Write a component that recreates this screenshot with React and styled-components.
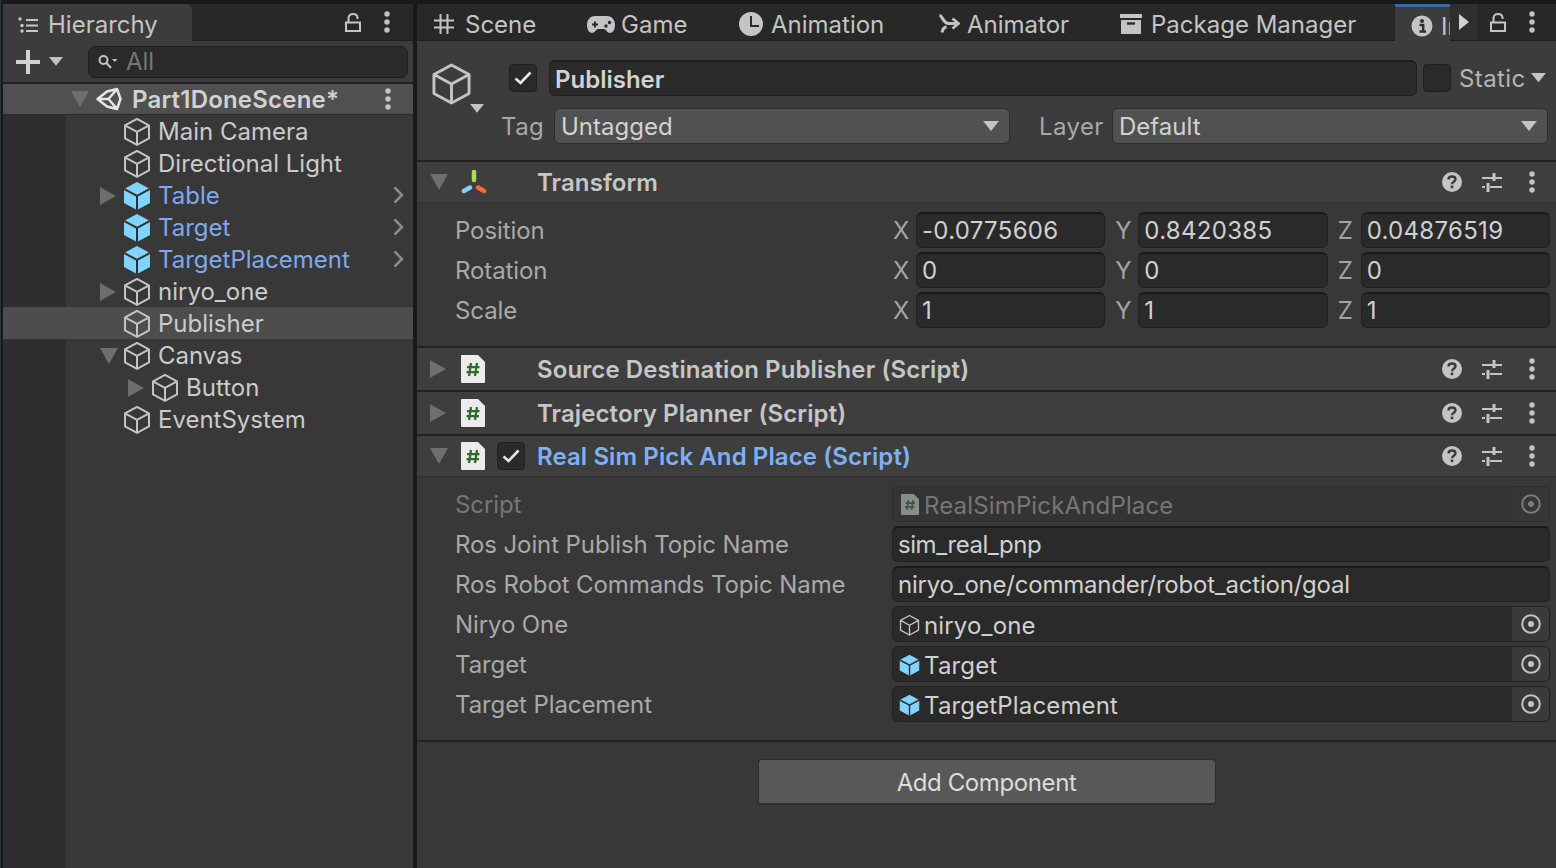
import React from "react";
import styled, { createGlobalStyle } from "styled-components";

const GlobalStyle = createGlobalStyle`
  html, body { margin: 0; padding: 0; background: #191919; }
  body {
    font-family: Inter, "Liberation Sans", sans-serif;
    font-size: 24px;
    color: #c8c8c8;
    overflow: hidden;
  }
  * { box-sizing: border-box; }
  svg { display: block; flex: none; }
`;

const Page = styled.div`
  width: 1556px;
  height: 868px;
  display: flex;
  padding: 4px 0 0 2px;
  gap: 4px;
  background: #191919;
  border-left: 1px solid #26324a;
`;

const LeftPanel = styled.section`
  width: 410px;
  flex: none;
  display: flex;
  flex-direction: column;
`;

const RightPanel = styled.section`
  flex: 1;
  min-width: 0;
  display: flex;
  flex-direction: column;
  background: #383838;
`;

const TabBar = styled.div`
  height: 37px;
  flex: none;
  display: flex;
  align-items: stretch;
  background: #282828;
  border-bottom: 1px solid #1f1f1f;
`;

const Tab = styled.div`
  width: ${(p) => p.$width}px;
  flex: none;
  display: flex;
  align-items: center;
  gap: ${(p) => p.$gap || 8}px;
  padding-left: ${(p) => p.$pad || 17}px;
  color: #c4c4c4;
  white-space: nowrap;
  overflow: hidden;
  padding-top: 4px;
  background: ${(p) => (p.$active ? "#3c3c3c" : "transparent")};
  border-top: ${(p) => (p.$accent ? "3px solid #3a6a9c" : "none")};
  border-top-right-radius: ${(p) => (p.$round ? "6px" : "0")};
  margin-bottom: ${(p) => (p.$active ? "-1px" : "0")};
`;

const TabTools = styled.div`
  margin-left: auto;
  display: flex;
  align-items: center;
`;

const ToolSlot = styled.div`
  width: ${(p) => p.$width || 40}px;
  height: 36px;
  display: flex;
  align-items: center;
  justify-content: center;
  background: ${(p) => p.$bg || "transparent"};
`;

const HierarchyBar = styled.div`
  height: 43px;
  flex: none;
  display: flex;
  align-items: center;
  background: #3c3c3c;
  border-bottom: 2px solid #232323;
  padding: 0 5px 0 13px;
  gap: 9px;
`;

const SearchBox = styled.div`
  margin-left: 16px;
  flex: 1;
  height: 32px;
  display: flex;
  align-items: center;
  gap: 8px;
  padding-left: 9px;
  background: #2a2a2a;
  border: 1px solid #1f1f1f;
  border-radius: 7px;
  color: #767676;
`;

const Tree = styled.div`
  flex: 1;
  background: linear-gradient(to right, #2e2e2e 63px, #383838 63px);
`;

const SceneRow = styled.div`
  height: 31px;
  display: flex;
  align-items: center;
  background: #505050;
  padding-left: 68px;
  padding-right: 22px;
  font-weight: 600;
  letter-spacing: 0.2px;
  color: #d2d2d2;
  border-bottom: 1px solid #2a2a2a;
`;

const TreeRow = styled.div`
  height: 32px;
  display: flex;
  align-items: center;
  padding-left: ${(p) => 97 + p.$depth * 28}px;
  padding-right: 9px;
  background: ${(p) => (p.$selected ? "#4d4d4d" : "transparent")};
  color: ${(p) => (p.$prefab ? "#7fa8ee" : "#cbcbcb")};
  white-space: nowrap;
`;

const ArrowSlot = styled.div`
  width: ${(p) => p.$width}px;
  flex: none;
  display: flex;
  align-items: center;
`;

const TreeIcon = styled.div`
  display: flex;
  margin-top: 2px;
`;

const RowLabel = styled.span`
  margin-left: ${(p) => p.$gap || 7}px;
`;

const RowEnd = styled.div`
  margin-left: auto;
`;

const Header = styled.div`
  height: 121px;
  flex: none;
  background: #3c3c3c;
  display: flex;
  flex-direction: column;
  padding-top: 19px;
  gap: 12px;
  border-bottom: 2px solid #232323;
`;

const HeaderRow = styled.div`
  display: flex;
  align-items: center;
  height: 36px;
`;

const HeaderIcon = styled.div`
  width: 92px;
  height: 36px;
  flex: none;
  padding: 2px 0 0 14px;
  position: relative;
`;

const IconCaret = styled.div`
  position: absolute;
  left: 53px;
  top: 44px;
`;

const Check = styled.div`
  width: 28px;
  height: 28px;
  flex: none;
  display: flex;
  align-items: center;
  justify-content: center;
  background: #2a2a2a;
  border: 1px solid #212121;
  border-radius: 4px;
`;

const NameInput = styled.div`
  width: 868px;
  height: 36px;
  margin: 0 6px 0 12px;
  display: flex;
  align-items: center;
  padding: 2px 0 0 5px;
  font-weight: 600;
  color: #d2d2d2;
  background: #2a2a2a;
  border: 1px solid #212121;
  border-top: 2px solid #1c1c1c;
  border-radius: 6px;
`;

const StaticLabel = styled.div`
  margin-left: 8px;
  display: flex;
  align-items: center;
  gap: 5px;
  color: #b4b4b4;
  letter-spacing: 0.4px;
`;

const HeaderLabel = styled.span`
  width: ${(p) => p.$width}px;
  flex: none;
  padding-left: ${(p) => p.$pad}px;
  color: #a8a8a8;
  letter-spacing: 0.4px;
`;

const Popup = styled.div`
  width: ${(p) => p.$width}px;
  height: 36px;
  flex: none;
  display: flex;
  align-items: center;
  justify-content: space-between;
  padding: 0 10px 0 6px;
  background: #515151;
  border: 1px solid #2e2e2e;
  border-radius: 6px;
  color: #d2d2d2;
`;

const ComponentHead = styled.div`
  height: ${(p) => (p.$open ? 42 : 44)}px;
  flex: none;
  display: grid;
  grid-template-columns: 44px 36px 40px 1fr auto;
  align-items: center;
  background: #3e3e3e;
  border-bottom: 2px solid ${(p) => (p.$open ? "#333333" : "#232323")};
  font-weight: 600;
  letter-spacing: 0.1px;
  color: ${(p) => (p.$prefab ? "#7fb0f5" : "#c6c6c6")};
`;

const Foldout = styled.div`
  padding-left: 13px;
`;

const HeadTools = styled.div`
  display: flex;
  padding-right: 4px;
`;

const Body = styled.div`
  flex: none;
  padding: 6px 0 16px;
  border-bottom: 2px solid #232323;
  display: flex;
  flex-direction: column;
`;

const PropRow = styled.div`
  height: 40px;
  display: grid;
  grid-template-columns: ${(p) => p.$columns};
  align-items: center;
  padding-left: 38px;
  padding-right: 6px;
`;

const PropLabel = styled.span`
  color: ${(p) => (p.$dim ? "#767676" : "#a9a9a9")};
  letter-spacing: -0.1px;
  white-space: nowrap;
`;

const Vec = styled.div`
  display: flex;
  gap: 10px;
`;

const VecItem = styled.div`
  flex: 1;
  display: flex;
  align-items: center;
`;

const Axis = styled.span`
  width: 23px;
  flex: none;
  color: #a4a4a4;
`;

const Field = styled.div`
  flex: 1;
  min-width: 0;
  height: 36px;
  display: flex;
  align-items: center;
  padding-left: 5px;
  background: ${(p) => (p.$ghost ? "#343434" : "#2a2a2a")};
  border: 1px solid ${(p) => (p.$ghost ? "#2e2e2e" : "#212121")};
  border-top: 2px solid ${(p) => (p.$ghost ? "#2e2e2e" : "#1a1a1a")};
  border-radius: 6px;
  color: ${(p) => (p.$ghost ? "#767676" : "#d0d0d0")};
  letter-spacing: ${(p) => p.$spacing ?? 0.3}px;
  white-space: nowrap;
  overflow: hidden;
`;

const ObjectField = styled(Field)`
  padding: 2px 0 0 ${(p) => (p.$ghost ? 8 : 6)}px;
  gap: ${(p) => (p.$ghost ? 5 : 4)}px;
  letter-spacing: 0.15px;
  border-top-width: 1px;
  border-top-color: ${(p) => (p.$ghost ? "#2e2e2e" : "#212121")};
`;

const Picker = styled.div`
  margin: -2px 0 0 auto;
  align-self: flex-start;
  width: 37px;
  height: 34px;
  display: flex;
  align-items: center;
  justify-content: center;
  background: ${(p) => (p.$ghost ? "#363636" : "#3a3a3a")};
`;

const Footer = styled.div`
  flex: 1;
  padding-top: 17px;
  display: flex;
  justify-content: center;
`;

const AddButton = styled.div`
  width: 458px;
  height: 46px;
  display: flex;
  align-items: center;
  justify-content: center;
  padding-top: 1px;
  background: #585858;
  border: 1px solid #2e2e2e;
  border-bottom-width: 2px;
  border-radius: 4px;
  color: #dcdcdc;
  letter-spacing: -0.4px;
`;

const Down = ({ size = 16, color = "#c4c4c4" }) => (
  <svg width={size} height={size * 0.62} viewBox="0 0 16 10">
    <path d="M0 0H16L8 10Z" fill={color} />
  </svg>
);

const FoldOpen = () => (
  <svg width="18" height="16" viewBox="0 0 18 16">
    <path d="M0 0H18L9 16Z" fill="#6e6e6e" />
  </svg>
);

const FoldClosed = () => (
  <svg width="16" height="18" viewBox="0 0 16 18">
    <path d="M0 0L16 9L0 18Z" fill="#6e6e6e" />
  </svg>
);

const Cube = ({ size = 28, prefab, color = "#c4c4c4", width = 2 }) =>
  prefab ? (
    <svg width={size} height={size * 1.07} viewBox="0 0 28 30">
      <path d="M14 1L27 8V22L14 29L1 22V8Z" fill="#80d4ff" />
      <path d="M1 8L14 15L27 8M14 15V29" fill="none" stroke="#303030" strokeWidth="2" />
    </svg>
  ) : (
    <svg width={size} height={size * 1.07} viewBox="0 0 28 30">
      <path
        d="M14 2L26 8.5V21.5L14 28L2 21.5V8.5Z M2 8.5L14 15L26 8.5M14 15V28"
        fill="none"
        stroke={color}
        strokeWidth={width}
        strokeLinejoin="round"
      />
    </svg>
  );

const UnityLogo = () => (
  <svg width="26" height="24" viewBox="0 0 26 24">
    <path
      d="M1.5 12L11 4.5L21 2L24.5 12L21 22L11 19.5Z M1.5 12H12.5M21 2L12.5 12L21 22"
      fill="none"
      stroke="#e6e6e6"
      strokeWidth="2.5"
      strokeLinejoin="round"
    />
  </svg>
);

const Dots = ({ color = "#c4c4c4" }) => (
  <svg width="6" height="22" viewBox="0 0 6 22">
    <circle cx="3" cy="3" r="2.7" fill={color} />
    <circle cx="3" cy="11" r="2.7" fill={color} />
    <circle cx="3" cy="19" r="2.7" fill={color} />
  </svg>
);

const Lock = () => (
  <svg width="16" height="19" viewBox="0 0 16 19">
    <path
      d="M1 9.5H15V18H1Z M3.5 9.5V5C3.5 2.2 5.5 1 8 1C10.5 1 12.5 2.2 12.5 5V6"
      fill="none"
      stroke="#c4c4c4"
      strokeWidth="2"
    />
  </svg>
);

const ListIcon = () => (
  <svg width="20" height="16" viewBox="0 0 20 16">
    <path d="M8 3H20M8 8.5H20M8 14H20" stroke="#c4c4c4" strokeWidth="2" />
    <circle cx="2" cy="2" r="1.7" fill="#c4c4c4" />
    <circle cx="4" cy="8.5" r="1.7" fill="#c4c4c4" />
    <circle cx="4" cy="14" r="1.7" fill="#c4c4c4" />
  </svg>
);

const SearchIcon = () => (
  <svg width="20" height="16" viewBox="0 0 20 16">
    <circle cx="5.5" cy="6" r="4" fill="none" stroke="#c4c4c4" strokeWidth="2" />
    <path d="M8.5 9L13 14" stroke="#c4c4c4" strokeWidth="2" />
    <path d="M14 5H19.5L16.7 8Z" fill="#c4c4c4" />
  </svg>
);

const Plus = () => (
  <svg width="24" height="24" viewBox="0 0 24 24">
    <path d="M0 12H24M12 0V24" stroke="#d2d2d2" strokeWidth="4" />
  </svg>
);

const SceneIcon = () => (
  <svg width="20" height="20" viewBox="0 0 20 20">
    <path d="M6.5 0V20M13.5 0V20M0 6.5H20M0 13.5H20" stroke="#c4c4c4" strokeWidth="2" />
  </svg>
);

const GameIcon = () => (
  <svg width="28" height="18" viewBox="0 0 28 18">
    <path
      d="M8 1H20C25 1 28 5 28 10C28 15 25.5 18 23 18C20 18 19 14 17 14H11C9 14 8 18 5 18C2.5 18 0 15 0 10C0 5 3 1 8 1Z"
      fill="#c4c4c4"
    />
    <path d="M5 9.5H11M8 6.5V12.5" stroke="#2a2a2a" strokeWidth="2" />
    <circle cx="19" cy="11" r="1.7" fill="#2a2a2a" />
    <circle cx="22.5" cy="7.5" r="1.7" fill="#2a2a2a" />
  </svg>
);

const ClockIcon = () => (
  <svg width="24" height="24" viewBox="0 0 24 24">
    <circle cx="12" cy="12" r="12" fill="#c4c4c4" />
    <path d="M12 4V14H20" fill="none" stroke="#2a2a2a" strokeWidth="2" />
  </svg>
);

const AnimatorIcon = () => (
  <svg width="22" height="20" viewBox="0 0 22 20">
    <path
      d="M1.5 1.5C5 2 4 8 10 9.5H19M4 18.5C4.5 15.5 6 13.5 8.5 12.8"
      fill="none"
      stroke="#c4c4c4"
      strokeWidth="3"
    />
    <path d="M14.5 4.5L20.5 9.5L14.5 14.5" fill="none" stroke="#c4c4c4" strokeWidth="2.6" />
  </svg>
);

const PackageIcon = () => (
  <svg width="22" height="20" viewBox="0 0 22 20">
    <path d="M0 0H22V4H0Z" fill="#c4c4c4" />
    <path d="M1 6H21V20H1Z" fill="#c4c4c4" />
    <path d="M7 9.5H15" stroke="#2a2a2a" strokeWidth="2.4" />
  </svg>
);

const InfoIcon = () => (
  <svg width="22" height="22" viewBox="0 0 22 22">
    <circle cx="11" cy="11" r="10.5" fill="#c4c4c4" />
    <circle cx="11" cy="6" r="2" fill="#2f2f2f" />
    <path d="M8.5 10H12.2V16.5M8.5 16.5H15" fill="none" stroke="#2f2f2f" strokeWidth="2.4" />
  </svg>
);

const PlayIcon = () => (
  <svg width="10" height="16" viewBox="0 0 10 16">
    <path d="M0 0L10 8L0 16Z" fill="#d2d2d2" />
  </svg>
);

const HelpIcon = () => (
  <svg width="20" height="20" viewBox="0 0 20 20">
    <circle cx="10" cy="10" r="10" fill="#c4c4c4" />
    <path
      d="M6.5 7.5C6.5 5.5 8 4.5 10 4.5C12 4.5 13.5 5.7 13.5 7.3C13.5 9.8 10 9.5 10 12.2"
      fill="none"
      stroke="#3a3a3a"
      strokeWidth="2.4"
    />
    <rect x="8.7" y="13.6" width="2.6" height="2.6" fill="#3a3a3a" />
  </svg>
);

const SlidersIcon = () => (
  <svg width="20" height="20" viewBox="0 0 20 20">
    <path d="M0 6H20M0 15H3M8 15H20" stroke="#c4c4c4" strokeWidth="2" />
    <path d="M12 1V9M6 11V20" stroke="#c4c4c4" strokeWidth="3" />
  </svg>
);

const TransformIcon = () => (
  <svg width="26" height="24" viewBox="0 0 26 24">
    <path d="M13 2V10" stroke="#a7e04f" strokeWidth="4.5" strokeLinecap="round" />
    <path d="M3 21L9 17.5" stroke="#7fd0fb" strokeWidth="4.5" strokeLinecap="round" />
    <path d="M23 21L17 17.5" stroke="#ee6c40" strokeWidth="4.5" strokeLinecap="round" />
  </svg>
);

const ScriptIcon = ({ width = 24, dim }) => (
  <svg width={width} height={width * 1.17} viewBox="0 0 24 28">
    <path d="M1 0H17L24 7V27C24 27.5 23.5 28 23 28H1C.5 28 0 27.5 0 27V1C0 .5 .5 0 1 0Z" fill={dim ? "#8a8a8a" : "#ececec"} />
    <path
      d="M10 8L8 21M16 8L14 21M6 12H18.5M5.5 17H18"
      fill="none"
      stroke={dim ? "#365a36" : "#2f6a2f"}
      strokeWidth="2.3"
    />
  </svg>
);

const Tick = () => (
  <svg width="18" height="14" viewBox="0 0 18 14">
    <path d="M1.5 7.5L6.5 12L16.5 1.5" fill="none" stroke="#e8e8e8" strokeWidth="2.6" />
  </svg>
);

const TargetIcon = ({ dim }) => (
  <svg width="20" height="20" viewBox="0 0 20 20">
    <circle cx="10" cy="10" r="8.8" fill="none" stroke={dim ? "#7c7c7c" : "#c4c4c4"} strokeWidth="2" />
    <circle cx="10" cy="10" r="3" fill={dim ? "#7c7c7c" : "#c4c4c4"} />
  </svg>
);

const ChevronIcon = () => (
  <svg width="11" height="18" viewBox="0 0 11 18">
    <path d="M1.5 1.5L9 9L1.5 16.5" fill="none" stroke="#8a8a8a" strokeWidth="2.6" />
  </svg>
);

const TREE = [
  { name: "Main Camera", depth: 0 },
  { name: "Directional Light", depth: 0 },
  { name: "Table", depth: 0, prefab: true, fold: "closed" },
  { name: "Target", depth: 0, prefab: true },
  { name: "TargetPlacement", depth: 0, prefab: true },
  { name: "niryo_one", depth: 0, fold: "closed" },
  { name: "Publisher", depth: 0, selected: true },
  { name: "Canvas", depth: 0, fold: "open" },
  { name: "Button", depth: 1, fold: "closed" },
  { name: "EventSystem", depth: 0 },
];

const TRANSFORM = [
  { label: "Position", x: "-0.0775606", y: "0.8420385", z: "0.04876519" },
  { label: "Rotation", x: "0", y: "0", z: "0" },
  { label: "Scale", x: "1", y: "1", z: "1" },
];

const VEC_COLUMNS = "438px 1fr";
const FIELD_COLUMNS = "437px 1fr";

const Tools = () => (
  <HeadTools>
    <ToolSlot><HelpIcon /></ToolSlot>
    <ToolSlot><SlidersIcon /></ToolSlot>
    <ToolSlot><Dots /></ToolSlot>
  </HeadTools>
);

const App = () => (
  <Page>
    <GlobalStyle />
    <LeftPanel>
      <TabBar>
        <Tab $active $round $width={189} $pad={15} $gap={10}>
          <ListIcon />
          Hierarchy
        </Tab>
        <TabTools>
          <ToolSlot><Lock /></ToolSlot>
          <ToolSlot $width={28}><Dots /></ToolSlot>
          <ToolSlot $width={12} />
        </TabTools>
      </TabBar>
      <HierarchyBar>
        <Plus />
        <Down size={14} />
        <SearchBox>
          <SearchIcon />
          All
        </SearchBox>
      </HierarchyBar>
      <SceneRow>
        <ArrowSlot $width={25}><FoldOpen /></ArrowSlot>
        <UnityLogo />
        <RowLabel $gap={10}>Part1DoneScene*</RowLabel>
        <RowEnd><Dots /></RowEnd>
      </SceneRow>
      <Tree>
        {TREE.map((row) => (
          <TreeRow
            key={row.name}
            $depth={row.depth}
            $prefab={row.prefab}
            $selected={row.selected}
          >
            <ArrowSlot $width={23}>
              {row.fold === "open" && <TreeIcon><FoldOpen /></TreeIcon>}
              {row.fold === "closed" && <TreeIcon><FoldClosed /></TreeIcon>}
            </ArrowSlot>
            <TreeIcon><Cube prefab={row.prefab} /></TreeIcon>
            <RowLabel>{row.name}</RowLabel>
            {row.prefab && <RowEnd><ChevronIcon /></RowEnd>}
          </TreeRow>
        ))}
      </Tree>
    </LeftPanel>

    <RightPanel>
      <TabBar>
        <Tab $width={153} $gap={11}><SceneIcon />Scene</Tab>
        <Tab $width={152} $gap={6}><GameIcon />Game</Tab>
        <Tab $width={199}><ClockIcon />Animation</Tab>
        <Tab $width={182} $gap={7}><AnimatorIcon />Animator</Tab>
        <Tab $width={292} $gap={9}><PackageIcon />Package Manager</Tab>
        <Tab $active $accent $width={55} $pad={16}><InfoIcon />Inspector</Tab>
        <ToolSlot $width={31} $bg="#2f2f2f"><PlayIcon /></ToolSlot>
        <TabTools>
          <ToolSlot><Lock /></ToolSlot>
          <ToolSlot $width={28}><Dots /></ToolSlot>
          <ToolSlot $width={10} />
        </TabTools>
      </TabBar>

      <Header>
        <HeaderRow>
          <HeaderIcon>
            <Cube size={41} width={2} />
            <IconCaret><Down size={14} /></IconCaret>
          </HeaderIcon>
          <Check><Tick /></Check>
          <NameInput>Publisher</NameInput>
          <Check />
          <StaticLabel>Static<Down size={15} /></StaticLabel>
        </HeaderRow>
        <HeaderRow>
          <HeaderLabel $width={137} $pad={84}>Tag</HeaderLabel>
          <Popup $width={456}>Untagged<Down /></Popup>
          <HeaderLabel $width={102} $pad={29}>Layer</HeaderLabel>
          <Popup $width={436}>Default<Down /></Popup>
        </HeaderRow>
      </Header>

      <ComponentHead $open>
        <Foldout><FoldOpen /></Foldout>
        <TransformIcon />
        <span />
        Transform
        <Tools />
      </ComponentHead>
      <Body>
        {TRANSFORM.map((row) => (
          <PropRow key={row.label} $columns={VEC_COLUMNS}>
            <PropLabel>{row.label}</PropLabel>
            <Vec>
              <VecItem><Axis>X</Axis><Field>{row.x}</Field></VecItem>
              <VecItem><Axis>Y</Axis><Field>{row.y}</Field></VecItem>
              <VecItem><Axis>Z</Axis><Field>{row.z}</Field></VecItem>
            </Vec>
          </PropRow>
        ))}
      </Body>

      <ComponentHead>
        <Foldout><FoldClosed /></Foldout>
        <ScriptIcon />
        <span />
        Source Destination Publisher (Script)
        <Tools />
      </ComponentHead>
      <ComponentHead>
        <Foldout><FoldClosed /></Foldout>
        <ScriptIcon />
        <span />
        Trajectory Planner (Script)
        <Tools />
      </ComponentHead>
      <ComponentHead $open $prefab>
        <Foldout><FoldOpen /></Foldout>
        <ScriptIcon />
        <Check><Tick /></Check>
        Real Sim Pick And Place (Script)
        <Tools />
      </ComponentHead>
      <Body>
        <PropRow $columns={FIELD_COLUMNS}>
          <PropLabel $dim>Script</PropLabel>
          <ObjectField $ghost>
            <ScriptIcon width={18} dim />
            RealSimPickAndPlace
            <Picker $ghost><TargetIcon dim /></Picker>
          </ObjectField>
        </PropRow>
        <PropRow $columns={FIELD_COLUMNS}>
          <PropLabel>Ros Joint Publish Topic Name</PropLabel>
          <Field $spacing={-0.45}>sim_real_pnp</Field>
        </PropRow>
        <PropRow $columns={FIELD_COLUMNS}>
          <PropLabel>Ros Robot Commands Topic Name</PropLabel>
          <Field $spacing={-0.22}>niryo_one/commander/robot_action/goal</Field>
        </PropRow>
        <PropRow $columns={FIELD_COLUMNS}>
          <PropLabel>Niryo One</PropLabel>
          <ObjectField>
            <Cube size={21} width={1.8} />
            niryo_one
            <Picker><TargetIcon /></Picker>
          </ObjectField>
        </PropRow>
        <PropRow $columns={FIELD_COLUMNS}>
          <PropLabel>Target</PropLabel>
          <ObjectField>
            <Cube size={21} prefab />
            Target
            <Picker><TargetIcon /></Picker>
          </ObjectField>
        </PropRow>
        <PropRow $columns={FIELD_COLUMNS}>
          <PropLabel>Target Placement</PropLabel>
          <ObjectField>
            <Cube size={21} prefab />
            TargetPlacement
            <Picker><TargetIcon /></Picker>
          </ObjectField>
        </PropRow>
      </Body>

      <Footer>
        <AddButton>Add Component</AddButton>
      </Footer>
    </RightPanel>
  </Page>
);

export default App;
